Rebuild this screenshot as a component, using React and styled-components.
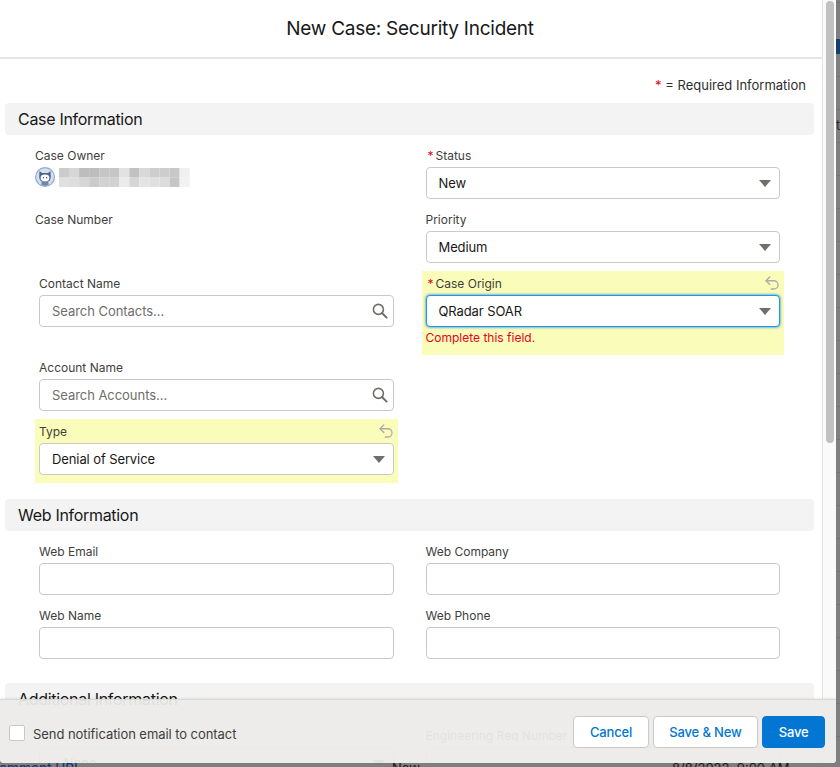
import React from "react";
import styled, { createGlobalStyle } from "styled-components";
import { Undo2 } from "lucide-react";

const GlobalStyle = createGlobalStyle`
  html, body {
    margin: 0;
    padding: 0;
    background: #7f7f7f;
    overflow: hidden;
  }
  * {
    box-sizing: border-box;
  }
  body, input, button {
    font-family: Inter, "Open Sans", "Liberation Sans", sans-serif;
  }
`;

const mosaic = [
  ["#cbcbcb", "#d6d6d6", "#bdbdbd", "#bdbdbd", "#c6c6c6", "#c6c6c6", "#e2e2e2", "#c2c2c2", "#d8d8d8", "#cdcdcd", "#cdcdcd", "#c8c8c8", "#f0f0f0"],
  ["#e0e0e0", "#dedede", "#d6d6d6", "#cbcbcb", "#d2d2d2", "#d2d2d2", "#ebebeb", "#d6d6d6", "#e4e4e4", "#e0e0e0", "#dcdcdc", "#c6c6c6", "#f2f2f2"],
];

function Avatar() {
  return (
    <svg width="20" height="20" viewBox="0 0 20 20">
      <circle cx="10" cy="10" r="10" fill="#8fa8cc" />
      <circle cx="10" cy="10" r="8.8" fill="#d5dfee" />
      <path d="M4.5 4 L7 6 H13 L15.5 4 L15.8 10 Q15.8 15.2 10 15.2 Q4.2 15.2 4.2 10 Z" fill="#4d648a" />
      <ellipse cx="10" cy="11" rx="4.4" ry="3.4" fill="#fff" />
      <circle cx="8.4" cy="10.8" r=".7" fill="#3f5478" />
      <circle cx="11.6" cy="10.8" r=".7" fill="#3f5478" />
      <path d="M6.5 15 H13.5 V18 Q10 19.5 6.5 18 Z" fill="#6f88ad" />
    </svg>
  );
}

function BlurredName() {
  return (
    <svg width="131" height="19" viewBox="0 0 131 19">
      <defs>
        <filter id="soft">
          <feGaussianBlur stdDeviation="0.5" />
        </filter>
      </defs>
      <g filter="url(#soft)">
        {mosaic.map((row, r) =>
          row.map((shade, c) => (
            <rect key={`${r}-${c}`} x={c * 10.05} y={r * 9.5} width="10.1" height="9.6" fill={shade} />
          ))
        )}
      </g>
    </svg>
  );
}

function SearchGlyph() {
  return (
    <svg width="16" height="16" viewBox="0 0 16 16" fill="none" stroke="#706e6b" strokeLinecap="round">
      <circle cx="6.4" cy="6.4" r="5" strokeWidth="1.6" />
      <path d="M10.2 10.2 L14.6 14.6" strokeWidth="2" />
    </svg>
  );
}

function SelectField({ value, focused }) {
  return (
    <SelectBox $focused={focused}>
      <span>{value}</span>
      <Caret />
    </SelectBox>
  );
}

function LookupField({ placeholder }) {
  return (
    <InputWrap>
      <TextInput placeholder={placeholder} readOnly />
      <SearchSlot>
        <SearchGlyph />
      </SearchSlot>
    </InputWrap>
  );
}

function FieldLabel({ children, required, changed }) {
  return (
    <LabelRow>
      <Label>
        {required && <Star>*</Star>}
        {children}
      </Label>
      {changed && <UndoIcon size={18} strokeWidth={1.7} color="#aeaba8" />}
    </LabelRow>
  );
}

export default function App() {
  return (
    <Screen>
      <GlobalStyle />
      <BehindStrip>
        <BehindBlock />
        <BehindChar>t</BehindChar>
      </BehindStrip>
      <BehindRow>
        <BehindLink>Comment URL</BehindLink>
        <BehindNew>New</BehindNew>
        <BehindDate>8/8/2022, 9:00 AM</BehindDate>
      </BehindRow>

      <Modal>
        <Main>
          <Header>New Case: Security Incident</Header>
          <Body>
            <RequiredNote>
              <NoteStar>*</NoteStar> = Required Information
            </RequiredNote>

            <Section>
              <SectionTitle>Case Information</SectionTitle>
              <Columns>
                <Field $flush>
                  <FieldLabel>Case Owner</FieldLabel>
                  <OwnerRow>
                    <Avatar />
                    <BlurredName />
                  </OwnerRow>
                </Field>
                <Field>
                  <FieldLabel required>Status</FieldLabel>
                  <SelectField value="New" />
                </Field>

                <Field $flush>
                  <FieldLabel>Case Number</FieldLabel>
                </Field>
                <Field>
                  <FieldLabel>Priority</FieldLabel>
                  <SelectField value="Medium" />
                </Field>

                <Field>
                  <FieldLabel>Contact Name</FieldLabel>
                  <LookupField placeholder="Search Contacts..." />
                </Field>
                <Field $changed>
                  <FieldLabel required changed>Case Origin</FieldLabel>
                  <SelectField value="QRadar SOAR" focused />
                  <ErrorText>Complete this field.</ErrorText>
                </Field>

                <Field>
                  <FieldLabel>Account Name</FieldLabel>
                  <LookupField placeholder="Search Accounts..." />
                </Field>
                <div />

                <Field $changed>
                  <FieldLabel changed>Type</FieldLabel>
                  <SelectField value="Denial of Service" />
                </Field>
                <div />
              </Columns>
            </Section>

            <Section>
              <SectionTitle>Web Information</SectionTitle>
              <Columns>
                <Field>
                  <FieldLabel>Web Email</FieldLabel>
                  <TextInput readOnly />
                </Field>
                <Field>
                  <FieldLabel>Web Company</FieldLabel>
                  <TextInput readOnly />
                </Field>
                <Field>
                  <FieldLabel>Web Name</FieldLabel>
                  <TextInput readOnly />
                </Field>
                <Field>
                  <FieldLabel>Web Phone</FieldLabel>
                  <TextInput readOnly />
                </Field>
              </Columns>
            </Section>

            <Section>
              <SectionTitle>Additional Information</SectionTitle>
              <Columns>
                <Field>
                  <FieldLabel>&nbsp;</FieldLabel>
                  <SelectField value="--None--" />
                </Field>
                <Field>
                  <FieldLabel>Engineering Req Number</FieldLabel>
                  <TextInput readOnly />
                </Field>
              </Columns>
            </Section>
          </Body>
        </Main>
        <ScrollGutter>
          <ScrollThumb />
        </ScrollGutter>

        <Footer>
          <CheckRow>
            <CheckBox />
            Send notification email to contact
          </CheckRow>
          <Actions>
            <ActionButton>Cancel</ActionButton>
            <ActionButton>Save &amp; New</ActionButton>
            <ActionButton $primary>Save</ActionButton>
          </Actions>
        </Footer>
      </Modal>
    </Screen>
  );
}

const Screen = styled.div`
  position: relative;
  width: 840px;
  height: 767px;
  overflow: hidden;
  background: #7f7f7f;
`;
const BehindStrip = styled.div`
  position: absolute;
  top: 0;
  right: 0;
  width: 4px;
  height: 100%;
  overflow: hidden;
  background: repeating-linear-gradient(
    to bottom,
    #7f7f7f 0,
    #7f7f7f 32px,
    #747474 32px,
    #747474 33px
  );
  background-position: 0 11px;
`;
const BehindBlock = styled.div`
  position: absolute;
  top: 39px;
  left: 0;
  width: 4px;
  height: 15px;
  background: #123f70;
`;
const BehindChar = styled.div`
  position: absolute;
  top: 117px;
  left: 0;
  font-size: 13px;
  line-height: 16px;
  color: #2b2b2b;
`;
const BehindRow = styled.div`
  position: absolute;
  left: 0;
  right: 0;
  top: 760px;
  height: 7px;
  overflow: hidden;
  font-size: 13px;
  line-height: 16px;
`;
const BehindLink = styled.span`
  position: absolute;
  left: -11px;
  color: #0b3d78;
  font-size: 13.5px;
  font-weight: 500;
`;
const BehindNew = styled.span`
  position: absolute;
  left: 392px;
  color: #181818;
`;
const BehindDate = styled.span`
  position: absolute;
  left: 672px;
  color: #181818;
`;
const Modal = styled.div`
  position: relative;
  display: flex;
  width: 836px;
  height: 763px;
  overflow: hidden;
  background: #fff;
  border-radius: 0 0 4px 4px;
`;
const Main = styled.div`
  width: 822px;
  height: 100%;
  flex: none;
  display: flex;
  flex-direction: column;
`;
const Header = styled.div`
  height: 59px;
  flex: none;
  display: flex;
  align-items: center;
  justify-content: center;
  padding-right: 2px;
  border-bottom: 2px solid #e5e5e5;
  font-size: 19px;
  letter-spacing: -0.25px;
  color: #181818;
`;
const Body = styled.div`
  flex: 1;
  overflow: hidden;
`;
const RequiredNote = styled.div`
  padding: 16px 16px 8px 0;
  text-align: right;
  font-size: 13px;
  line-height: 20px;
  color: #2e2e2e;
`;
const NoteStar = styled.span`
  color: #ea001e;
`;
const Section = styled.section`
  margin: 0 8px 16px 5px;
`;
const SectionTitle = styled.h2`
  margin: 0;
  height: 32px;
  padding-left: 13px;
  background: #f3f3f3;
  border-radius: 4px;
  font-size: 16px;
  font-weight: 400;
  letter-spacing: -0.3px;
  line-height: 32px;
  color: #181818;
`;
const Columns = styled.div`
  display: grid;
  grid-template-columns: 1fr 1fr;
  column-gap: 24px;
  padding: 8px 30px 0;
`;
const Field = styled.div`
  min-width: 0;
  min-height: 64px;
  padding: 5px ${(p) => (p.$flush ? "0" : "4px")} 8px;
  background: ${(p) => (p.$changed ? "#fafcba" : "transparent")};
`;
const LabelRow = styled.div`
  display: flex;
  align-items: center;
  justify-content: space-between;
  height: 16px;
  margin-bottom: 3px;
`;
const Label = styled.label`
  font-size: 12px;
  line-height: 16px;
  color: #3e3e3c;
`;
const UndoIcon = styled(Undo2)`
  flex: none;
  margin: -3px -1px 0 0;
`;
const Star = styled.span`
  color: #ea001e;
  margin: 0 2px;
`;
const OwnerRow = styled.div`
  display: flex;
  align-items: center;
  gap: 4px;
  height: 20px;
  margin-top: 3px;
`;
const SelectBox = styled.div`
  display: flex;
  align-items: center;
  justify-content: space-between;
  height: 32px;
  padding: 0 8px 0 12px;
  background: #fff;
  border: 1px solid ${(p) => (p.$focused ? "#1b96ff" : "#c9c9c9")};
  border-radius: 4px;
  box-shadow: ${(p) => (p.$focused ? "0 0 3px #0176d3" : "none")};
  font-size: 13px;
  letter-spacing: -0.1px;
  color: #181818;
`;
const Caret = styled.i`
  width: 0;
  height: 0;
  border-left: 6px solid transparent;
  border-right: 6px solid transparent;
  border-top: 7px solid #706e6b;
  margin-top: 1px;
`;
const InputWrap = styled.div`
  position: relative;
`;
const TextInput = styled.input`
  display: block;
  width: 100%;
  height: 32px;
  padding: 0 12px;
  background: #fff;
  border: 1px solid #c9c9c9;
  border-radius: 4px;
  outline: none;
  font-size: 13px;
  letter-spacing: -0.05px;
  color: #181818;
  &::placeholder {
    color: #706e6b;
    opacity: 1;
  }
`;
const SearchSlot = styled.span`
  position: absolute;
  top: 8px;
  right: 6px;
  display: flex;
`;
const ErrorText = styled.div`
  margin-top: 2px;
  font-size: 12px;
  line-height: 18px;
  color: #ea001e;
`;
const ScrollGutter = styled.div`
  width: 14px;
  flex: none;
  padding: 1px 2px 0 3px;
  background: #fafafa;
  border-left: 1px solid #e5e5e5;
`;
const ScrollThumb = styled.div`
  width: 8px;
  height: 442px;
  background: #c1c1c1;
  border-radius: 4px;
`;
const Footer = styled.div`
  position: absolute;
  left: 0;
  right: 0;
  bottom: 0;
  height: 64px;
  display: flex;
  align-items: center;
  justify-content: space-between;
  padding: 0 11px 0 9px;
  background: rgba(236, 235, 233, 0.94);
  border-top: 1px solid #d9d8d6;
  box-shadow: 0 -1px 2px rgba(0, 0, 0, 0.08);
`;
const CheckRow = styled.div`
  display: flex;
  align-items: center;
  gap: 8px;
  margin-top: 5px;
  font-size: 13px;
  letter-spacing: -0.06px;
  color: #3e3e3c;
`;
const CheckBox = styled.span`
  width: 16px;
  height: 16px;
  margin-top: -3px;
  background: #fff;
  border: 1px solid #c9c9c9;
  border-radius: 2px;
`;
const Actions = styled.div`
  display: flex;
  gap: 4px;
`;
const ActionButton = styled.button`
  height: 32px;
  padding: 0 15.5px;
  background: ${(p) => (p.$primary ? "#0176d3" : "#fff")};
  border: 1px solid ${(p) => (p.$primary ? "#0176d3" : "#c9c9c9")};
  border-radius: 4px;
  font-size: 13px;
  font-weight: 500;
  letter-spacing: -0.15px;
  color: ${(p) => (p.$primary ? "#fff" : "#0176d3")};
`;
